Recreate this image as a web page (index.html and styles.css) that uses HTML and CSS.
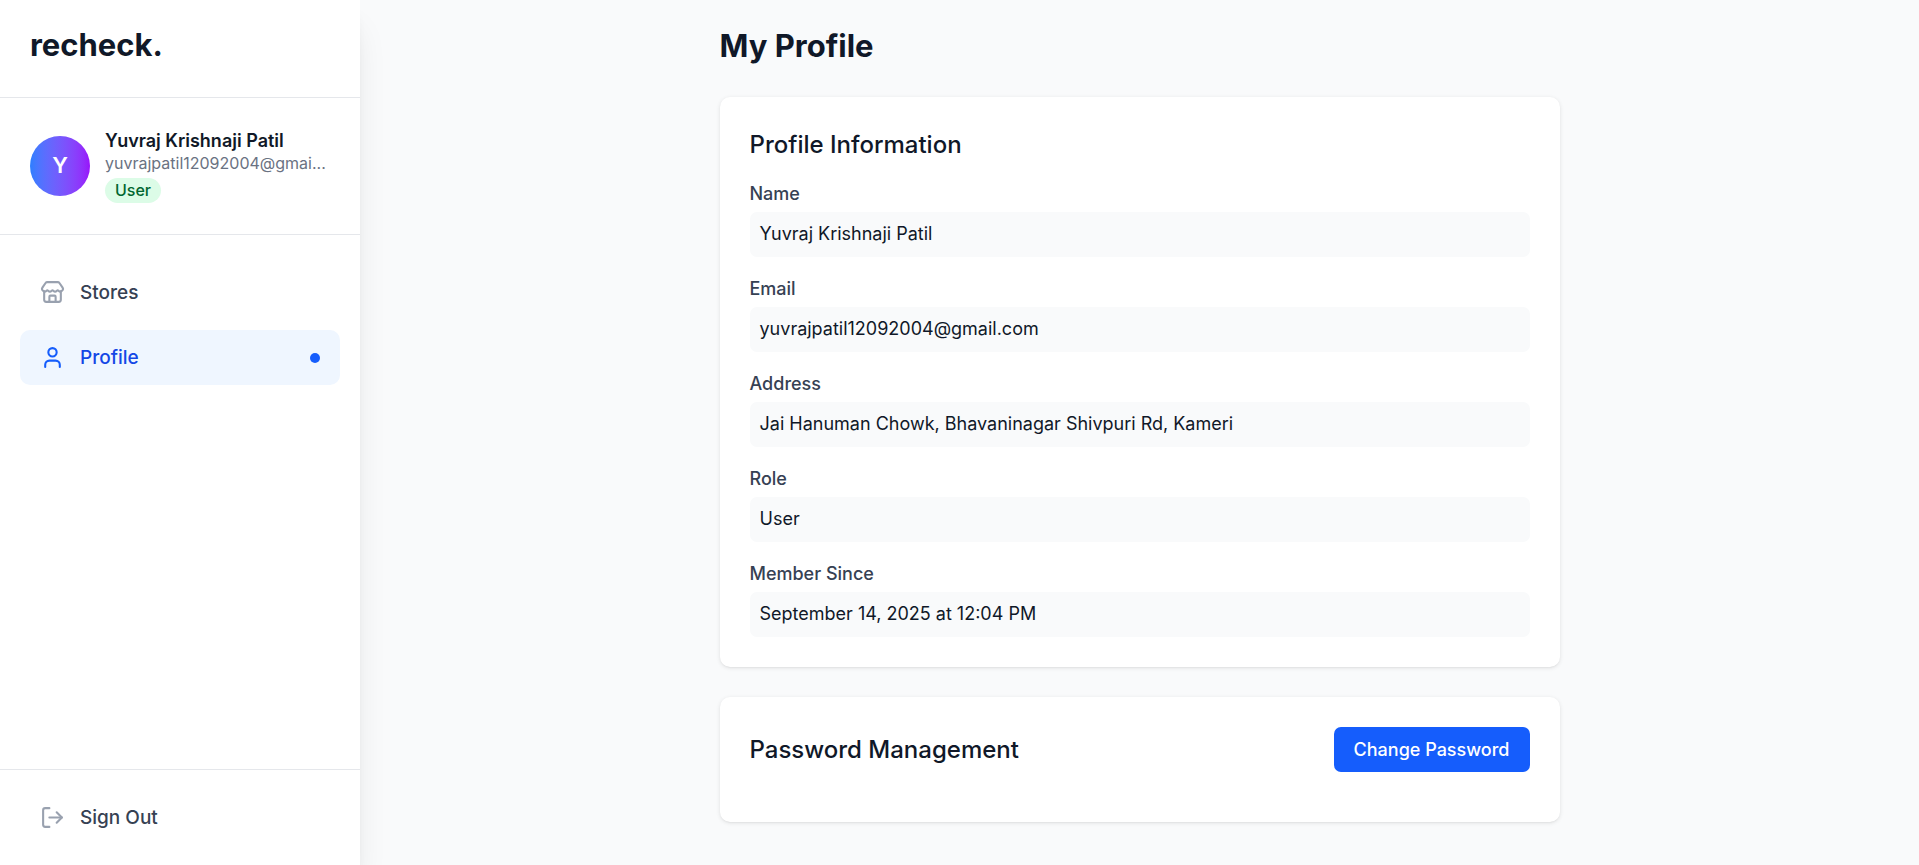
FILE: index.html
```html
<!DOCTYPE html>
<html lang="en">
<head>
  <meta charset="utf-8">
  <meta name="viewport" content="width=device-width, initial-scale=1">
  <title>My Profile</title>
  <link rel="stylesheet" href="styles.css">
</head>
<body>
  <div class="app">
    <aside class="sidebar">
      <div class="brand">recheck.</div>
      <div class="account">
        <div class="avatar">Y</div>
        <div class="account-text">
          <p class="account-name">Yuvraj Krishnaji Patil</p>
          <p class="account-email">yuvrajpatil12092004@gmai...</p>
          <span class="badge">User</span>
        </div>
      </div>
      <nav class="nav">
        <a class="nav-item" href="#stores">
          <svg class="icon" viewBox="0 0 24 24" aria-hidden="true">
            <path d="M15 21v-5a1 1 0 0 0-1-1h-4a1 1 0 0 0-1 1v5"/>
            <path d="M17.774 10.31a1.12 1.12 0 0 0-1.549 0 2.5 2.5 0 0 1-3.451 0 1.12 1.12 0 0 0-1.548 0 2.5 2.5 0 0 1-3.452 0 1.12 1.12 0 0 0-1.549 0 2.5 2.5 0 0 1-3.77-3.248l2.889-4.184A2 2 0 0 1 7 2h10a2 2 0 0 1 1.653.873l2.895 4.192a2.5 2.5 0 0 1-3.774 3.244"/>
            <path d="M4 10.95V19a2 2 0 0 0 2 2h12a2 2 0 0 0 2-2v-8.05"/>
          </svg>
          <span>Stores</span>
        </a>
        <a class="nav-item is-active" href="#profile" aria-current="page">
          <svg class="icon" viewBox="0 0 24 24" aria-hidden="true">
            <path d="M19 21v-2a4 4 0 0 0-4-4H9a4 4 0 0 0-4 4v2"/>
            <circle cx="12" cy="7" r="4"/>
          </svg>
          <span>Profile</span>
          <span class="dot"></span>
        </a>
      </nav>
      <div class="sidebar-foot">
        <button class="nav-item" type="button">
          <svg class="icon" viewBox="0 0 24 24" aria-hidden="true">
            <path d="M9 21H5a2 2 0 0 1-2-2V5a2 2 0 0 1 2-2h4"/>
            <path d="m16 17 5-5-5-5"/>
            <path d="M21 12H9"/>
          </svg>
          <span>Sign Out</span>
        </button>
      </div>
    </aside>

    <main class="main">
      <div class="content">
        <h1 class="page-title">My Profile</h1>
        <section class="card">
          <h2 class="card-title">Profile Information</h2>
          <dl class="fields">
            <div class="field"><dt>Name</dt><dd>Yuvraj Krishnaji Patil</dd></div>
            <div class="field"><dt>Email</dt><dd>yuvrajpatil12092004@gmail.com</dd></div>
            <div class="field"><dt>Address</dt><dd>Jai Hanuman Chowk, Bhavaninagar Shivpuri Rd, Kameri</dd></div>
            <div class="field"><dt>Role</dt><dd>User</dd></div>
            <div class="field"><dt>Member Since</dt><dd>September 14, 2025 at 12:04 PM</dd></div>
          </dl>
        </section>
        <section class="card">
          <div class="card-head">
            <h2 class="card-title">Password Management</h2>
            <button class="primary" type="button">Change Password</button>
          </div>
        </section>
      </div>
    </main>
  </div>
</body>
</html>
```

FILE: styles.css
```css
*,
*::before,
*::after {
  box-sizing: border-box;
}

body,
h1,
h2,
p,
dl,
dd {
  margin: 0;
}

body {
  background: #f9fafb;
  color: #101828;
  font-family: Inter, "Liberation Sans", sans-serif;
  font-size: 18px;
  line-height: 25px;
}

button {
  border: 0;
  font: inherit;
  cursor: pointer;
}

.app {
  display: flex;
  min-height: 100vh;
}

.sidebar {
  display: flex;
  flex: 0 0 360px;
  flex-direction: column;
  min-width: 0;
  background: #fff;
  box-shadow: 0 25px 31px -6px rgba(0, 0, 0, 0.1), 0 10px 12px -7px rgba(0, 0, 0, 0.1);
}

.brand {
  padding: 25px 30px 32px;
  border-bottom: 1px solid #e5e7eb;
  font-size: 31px;
  font-weight: 700;
  line-height: 40px;
}

.account {
  display: flex;
  align-items: center;
  gap: 15px;
  padding: 30px 30px 31px;
  border-bottom: 1px solid #e5e7eb;
}

.avatar {
  display: flex;
  flex: none;
  align-items: center;
  justify-content: center;
  width: 60px;
  height: 60px;
  border-radius: 50%;
  background: linear-gradient(to right in oklab, #2b7fff, #9810fa);
  color: #fff;
  font-size: 22px;
  font-weight: 600;
}

.account-text {
  flex: 1;
  min-width: 0;
}

.account-name {
  font-weight: 600;
}

.account-email {
  margin-bottom: 5px;
  color: #6a7282;
  font-size: 16px;
  line-height: 20px;
  white-space: nowrap;
}

.badge {
  display: block;
  width: fit-content;
  padding: 0 10px 1px;
  border-radius: 13px;
  background: #dcfce7;
  color: #016630;
  font-size: 16px;
  font-weight: 500;
  line-height: 24px;
}

.nav {
  display: flex;
  flex: 1;
  flex-direction: column;
  gap: 10px;
  padding: 30px 20px;
}

.nav-item {
  display: flex;
  align-items: center;
  gap: 15px;
  width: 100%;
  padding: 15px 20px;
  border-radius: 10px;
  background: transparent;
  color: #364153;
  font-size: 19px;
  font-weight: 500;
  text-decoration: none;
}

.nav-item.is-active {
  background: #eff6ff;
  color: #1447e6;
}

.icon {
  flex: none;
  width: 25px;
  height: 25px;
  fill: none;
  stroke: #99a1af;
  stroke-width: 2;
  stroke-linecap: round;
  stroke-linejoin: round;
}

.is-active .icon {
  stroke: #155dfc;
}

.dot {
  width: 10px;
  height: 10px;
  margin-left: auto;
  border-radius: 50%;
  background: #155dfc;
}

.sidebar-foot {
  padding: 20px;
  border-top: 1px solid #e5e7eb;
}

.main {
  flex: 1;
  min-width: 0;
  padding: 24px 30px;
}

.content {
  display: flex;
  flex-direction: column;
  gap: 30px;
  max-width: 840px;
  margin: 0 auto;
}

.page-title {
  font-size: 31px;
  font-weight: 700;
  line-height: 43px;
}

.card {
  padding: 30px;
  border-radius: 10px;
  background: #fff;
  box-shadow: 0 1px 4px rgba(0, 0, 0, 0.1), 0 1px 2px -1px rgba(0, 0, 0, 0.1);
}

.card-title {
  font-size: 24px;
  font-weight: 500;
  line-height: 35px;
}

.fields {
  display: flex;
  flex-direction: column;
  gap: 20px;
  margin-top: 20px;
}

.field dt {
  margin-bottom: 6px;
  color: #364153;
  font-weight: 500;
  line-height: 24px;
}

.field dd {
  padding: 10px 10px 11px;
  border-radius: 7px;
  background: #f9fafb;
  line-height: 24px;
}

.card-head {
  display: flex;
  align-items: center;
  justify-content: space-between;
  margin-bottom: 20px;
}

.primary {
  padding: 10px 20px;
  border-radius: 7px;
  background: #155dfc;
  color: #fff;
  font-weight: 500;
}
```
